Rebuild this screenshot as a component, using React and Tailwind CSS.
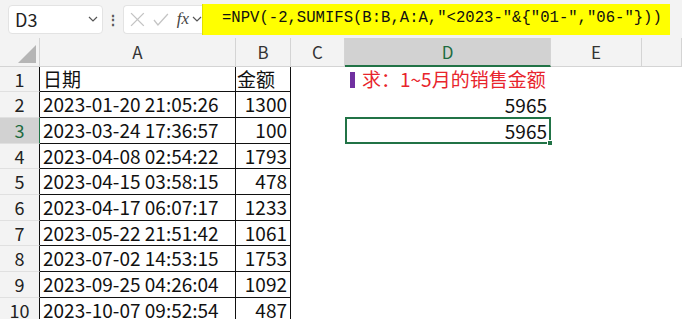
import React from "react";

const data = [
  ["2023-01-20 21:05:26", "1300"],
  ["2023-03-24 17:36:57", "100"],
  ["2023-04-08 02:54:22", "1793"],
  ["2023-04-15 03:58:15", "478"],
  ["2023-04-17 06:07:17", "1233"],
  ["2023-05-22 21:51:42", "1061"],
  ["2023-07-02 14:53:15", "1753"],
  ["2023-09-25 04:26:04", "1092"],
  ["2023-10-07 09:52:54", "487"],
];

const heights = ["h-[26px]", "h-[26px]", "h-[25px]", "h-[26px]", "h-[26px]", "h-[25px]", "h-[26px]", "h-[26px]", "h-[26px]"];

function Chevron() {
  return (
    <svg width="10" height="6" viewBox="0 0 10 6" fill="none" stroke="#555" strokeWidth="1.2">
      <path d="M1 1l4 4 4-4" />
    </svg>
  );
}

function Toolbar() {
  return (
    <div className="flex items-center h-[38px] bg-[#f3f3f3] pl-[8px]">
      <div className="flex items-center justify-between w-[95px] h-[29px] bg-white rounded-[4px] border border-[#e3e3e3] pl-[6px] pr-[4px]">
        <span className="text-[18px] text-[#222]">D3</span>
        <Chevron />
      </div>
      <div className="w-[20px] flex justify-center text-[#555] text-[14px] font-bold">⋮</div>
      <div className="flex items-center w-[79px] h-[29px] bg-white rounded-l-[4px] border border-[#e3e3e3] border-r-0 pl-[6px]">
        <svg width="15" height="15" viewBox="0 0 14 14" stroke="#c4c4c4" strokeWidth="1.3">
          <path d="M1 1l12 12M13 1L1 13" />
        </svg>
        <svg className="ml-[8px]" width="16" height="13" viewBox="0 0 16 13" fill="none" stroke="#c4c4c4" strokeWidth="1.3">
          <path d="M1 7l4 5L15 1" />
        </svg>
        <span className="ml-[8px] italic text-[17px] text-[#444] font-['Liberation_Serif',serif]">fx</span>
        <span className="ml-[3px]"><Chevron /></span>
      </div>
      <div className="flex items-center w-[468px] h-[31px] bg-[#ffff00] pl-[19px] font-['Liberation_Mono',monospace] text-[15.6px] text-[#111] border-l border-[#e0e000]">
        =NPV(-2,SUMIFS(B:B,A:A,"&lt;2023-"&amp;{"{"}"01-","06-"{"}"}))
      </div>
    </div>
  );
}

function ColHeader() {
  const cols = [
    ["A", "w-[196px]"],
    ["B", "w-[55px]"],
    ["C", "w-[54px]"],
    ["D", "w-[206px]"],
    ["E", "w-[91px]"],
    ["", "w-[40px]"],
  ];
  return (
    <div className="flex h-[29px] bg-[#f3f3f3]">
      <div className="relative w-[40px] border-r border-[#d4d4d4] border-b">
        <div className="absolute right-[3px] bottom-[3px] w-0 h-0 border-l-[18px] border-l-transparent border-b-[18px] border-b-[#b5b5b5]" />
      </div>
      {cols.map(([c, w], i) => (
        <div
          key={i}
          className={`${w} flex items-center justify-center text-[17px] border-r border-[#d4d4d4] ${
            c === "D" ? "bg-[#d2d2d2] text-[#1e6b41] border-b-2 border-b-[#217346]" : "text-[#333] border-b border-b-[#d4d4d4]"
          }`}
        >
          {c}
        </div>
      ))}
    </div>
  );
}

function RowHead({ n, sel, h, top }) {
  return (
    <div
      className={`w-[40px] ${h} flex items-center justify-center text-[18px] border-r ${top ? "" : ""} ${
        sel ? "bg-[#d2d2d2] text-[#1e6b41] border-r-[#217346]" : "bg-[#f3f3f3] text-[#222] border-r-[#111]"
      } border-b border-b-[#e0e0e0]`}
    >
      {n}
    </div>
  );
}

export default function App() {
  return (
    <div className="w-[682px] h-[319px] overflow-hidden bg-white font-['Noto_Sans_CJK_SC','Noto_Sans',sans-serif] text-[#111]">
      <Toolbar />
      <ColHeader />
      <div className="flex">
        <RowHead n="1" h="h-[25px]" />
        <div className="w-[196px] h-[25px] border-r border-b border-[#111] flex items-center pl-[3px] text-[19px]">日期</div>
        <div className="w-[55px] h-[25px] border-r border-b border-[#111] flex items-center pl-[1px] text-[19px]">金额</div>
        <div className="w-[54px]" />
        <div className="w-[206px] h-[25px] flex items-center pl-[5px] text-[19px] text-[#e8242c]">
          <span className="inline-block w-[5px] h-[16px] bg-[#7030a0] mr-[7px]" />
          求：1~5月的销售金额
        </div>
      </div>
      {data.map(([d, v], i) => (
        <div key={i} className="flex">
          <RowHead n={String(i + 2)} sel={i === 1} h={heights[i]} />
          <div className={`w-[196px] ${heights[i]} border-r border-b border-[#111] flex items-center pl-[3px] text-[19px]`}>{d}</div>
          <div className={`w-[55px] ${heights[i]} border-r border-b border-[#111] flex items-center justify-end pr-[3px] text-[19px]`}>{v}</div>
          <div className="w-[54px]" />
          <div className={`relative w-[206px] ${heights[i]} flex items-center justify-end pr-[4px] text-[19px]`}>
            {i < 2 ? "5965" : ""}
            {i === 1 && (
              <>
                <div className="absolute -top-[1px] left-0 w-[206px] h-[27px] border-2 border-[#217346]" />
                <div className="absolute -bottom-[2px] right-[-2px] w-[6px] h-[6px] bg-[#217346] border border-white" />
              </>
            )}
          </div>
        </div>
      ))}
    </div>
  );
}
